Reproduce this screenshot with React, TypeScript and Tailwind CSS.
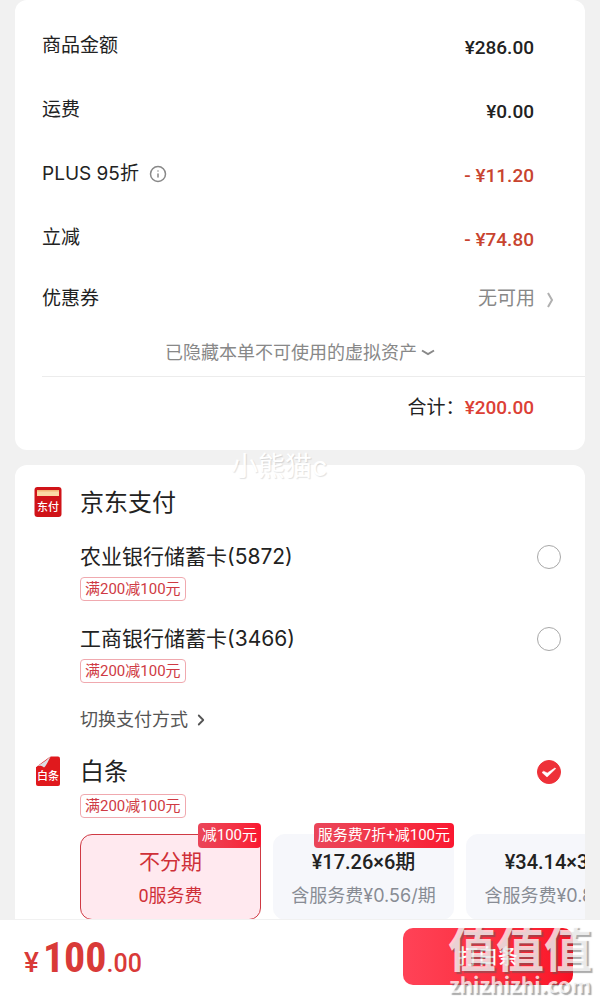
import { useState } from 'react'
import { ChevronRight, Info } from 'lucide-react'

const cjk = "font-[Inter,'Noto_Sans_CJK_SC',sans-serif]"
const num = "font-[Roboto,'Noto_Sans_CJK_SC',sans-serif]"

const fees = [
  { label: '商品金额', value: '¥286.00', off: false, info: false },
  { label: '运费', value: '¥0.00', off: false, info: false },
  { label: 'PLUS 95折', value: '- ¥11.20', off: true, info: true },
  { label: '立减', value: '- ¥74.80', off: true, info: false },
]

const cards = [
  { id: 'abc', name: '农业银行储蓄卡(5872)' },
  { id: 'icbc', name: '工商银行储蓄卡(3466)' },
]

const plans = [
  { title: '不分期', note: '0服务费', badge: '减100元' },
  { title: '¥17.26×6期', note: '含服务费¥0.56/期', badge: '服务费7折+减100元' },
  { title: '¥34.14×3期', note: '含服务费¥0.85/期', badge: '' },
]

function PayIcon() {
  return (
    <svg viewBox="0 0 28 32" className="w-7 h-8" aria-hidden="true">
      <rect x="0.5" y="0" width="27" height="30" rx="3" fill="#d01318" />
      <rect x="3" y="3" width="22" height="6" fill="#fbd9a4" />
      <rect x="3" y="3" width="22" height="1.5" fill="#f2b777" />
      <text x="14" y="24" textAnchor="middle" fontSize="11" fontWeight="500" fill="#fff" fontFamily="Noto Sans CJK SC, sans-serif">东付</text>
    </svg>
  )
}

function BaitiaoIcon() {
  return (
    <svg viewBox="0 0 28 32" className="w-7 h-8" aria-hidden="true">
      <path d="M2 11 L14 0.5 H24 a2 2 0 0 1 2 2 V28 a2 2 0 0 1 -2 2 H4 a2 2 0 0 1 -2 -2 Z" fill="#e0191d" />
      <path d="M1 0 H17 L2 11 Z" fill="#fff" />
      <path d="M2 10.5 C6 9 13 4 17 0 C14.5 4 13 9 10 11.5 C8 9.5 5 9.5 2 10.5 Z" fill="#dcdfe3" />
      <text x="14" y="24" textAnchor="middle" fontSize="11" fontWeight="500" fill="#fff" fontFamily="Noto Sans CJK SC, sans-serif">白条</text>
    </svg>
  )
}

function Tag() {
  return (
    <span className={`flex items-center w-fit h-6 px-1 border border-[#f0a9af] rounded-sm text-[15px] text-[#cf3a44] ${num}`}>
      满200减100元
    </span>
  )
}

function Radio({ id, checked, onSelect }: { id: string; checked: boolean; onSelect: () => void }) {
  return (
    <span className="grid size-6 shrink-0">
      <input
        type="radio"
        id={id}
        name="pay"
        checked={checked}
        onChange={onSelect}
        className="col-start-1 row-start-1 appearance-none size-6 rounded-full border border-[#a8a8a8] checked:border-[#ee3038] checked:bg-[#ee3038]"
      />
      {checked && (
        <svg viewBox="0 0 24 24" className="col-start-1 row-start-1 size-6 pointer-events-none" aria-hidden="true">
          <path d="M5 12.4 L6.6 11.2 L10.3 13 L17.8 8 L18.8 8.6 L10 17 Z" fill="#fff" stroke="#fff" strokeWidth="0.5" strokeLinejoin="round" />
        </svg>
      )}
    </span>
  )
}

export default function App() {
  const [pay, setPay] = useState('baitiao')
  const [plan, setPlan] = useState(0)

  return (
    <div className={`relative h-screen flex flex-col bg-[#f1f1f1] text-[#222] ${cjk}`}>
      <main className="flex-1 min-h-0 overflow-hidden px-[15px]">
        <section className="bg-white rounded-xl pt-[14px] pb-[10px] pl-[27px]">
          {fees.map(f => (
            <div key={f.label} className="flex items-center justify-between h-16 pr-[51px] text-[19px]">
              <span className="flex items-center gap-[10px]">
                {f.label}
                {f.info && <Info size={18} strokeWidth={2} className="text-[#888]" />}
              </span>
              <span className={`flex gap-1 font-medium pt-1 ${num} ${f.off ? 'text-[#c8442f]' : ''}`}>{f.value}</span>
            </div>
          ))}
          <div className="flex items-center justify-between h-[59px] pr-7 text-[19px]">
            <span>优惠券</span>
            <button className="flex items-center gap-2 text-[#888]">
              无可用
              <svg viewBox="0 0 14 18" className="w-[14px] h-[18px]" fill="none" stroke="#b0b0b0" strokeWidth="2" aria-hidden="true">
                <path d="M5 2 L9 9 L5 16" />
              </svg>
            </button>
          </div>
          <button className="flex items-center justify-center gap-1 w-full h-12 pr-[27px] text-lg text-[#888] border-b border-[#ececec]">
            已隐藏本单不可使用的虚拟资产
            <svg viewBox="0 0 14 8" className="w-[14px] h-2" fill="none" stroke="#888" strokeWidth="2" aria-hidden="true">
              <path d="M1 1.5 L7 5 L13 1.5" />
            </svg>
          </button>
          <div className="flex items-center justify-end h-[63px] pr-[51px] text-[19px]">
            <span>合计：</span>
            <span className={`font-medium text-[#dc4035] ${num}`}>¥200.00</span>
          </div>
        </section>

        <section className="mt-[15px] bg-white rounded-xl pt-[19px] pb-3 pl-[19px] overflow-hidden">
          <div className="flex items-center gap-[18px] h-[38px] text-2xl">
            <PayIcon />
            <h2>京东支付</h2>
          </div>
          <div className="flex flex-col gap-[22px] mt-[19px] pl-[46px] pr-6">
            {cards.map(c => (
              <div key={c.id}>
                <div className="flex items-center justify-between h-8 mb-1 text-[21px]">
                  <label htmlFor={c.id}>{c.name}</label>
                  <Radio id={c.id} checked={pay === c.id} onSelect={() => setPay(c.id)} />
                </div>
                <Tag />
              </div>
            ))}
          </div>
          <button className="flex items-center gap-1 h-6 mt-[25px] ml-[46px] text-lg text-[#555]">
            切换支付方式
            <ChevronRight size={18} strokeWidth={2.4} />
          </button>
          <div className="flex items-center gap-[18px] h-[38px] mt-[21px] pr-6 text-2xl">
            <BaitiaoIcon />
            <label htmlFor="baitiao" className="flex-1">白条</label>
            <Radio id="baitiao" checked={pay === 'baitiao'} onSelect={() => setPay('baitiao')} />
          </div>
          <div className="pl-[46px] pt-[3px]">
            <Tag />
            <div className="flex gap-3 mt-4">
              {plans.map((p, i) => (
                <button
                  key={p.title}
                  onClick={() => setPlan(i)}
                  className={`relative flex flex-col items-center shrink-0 w-[181px] h-[86px] pt-[11px] rounded-xl border ${
                    plan === i ? 'bg-[#ffe9ef] border-[#cf3a44] text-[#cf3038]' : 'bg-[#f6f7fb] border-[#f6f7fb]'
                  }`}
                >
                  {p.badge && (
                    <span className={`absolute -top-3 -right-px h-[25px] flex items-center px-1 rounded-sm text-[15px] text-white whitespace-nowrap bg-linear-to-r from-[#ea4559] to-[#fa1630] ${num}`}>
                      {p.badge}
                    </span>
                  )}
                  <span className={`leading-8 ${i ? `text-xl font-medium ${num}` : 'text-[21px]'}`}>{p.title}</span>
                  <span className={`text-lg leading-9 whitespace-nowrap ${plan === i ? num : 'text-[#888c94]'}`}>{p.note}</span>
                </button>
              ))}
            </div>
          </div>
        </section>
      </main>

      <footer className="flex items-center justify-between h-[84px] pl-6 pr-[27px] pb-[10px] bg-white border-t border-[#f1f1f1]">
        <p className={`flex items-baseline pt-[2px] text-[#d93a38] font-medium ${num}`}>
          <span className="text-[28px] mr-1">¥</span>
          <span className="text-[42px] font-bold font-['Roboto_Condensed','Liberation_Sans_Narrow',Roboto,sans-serif]">100</span>
          <span className="text-[25px]">.00</span>
        </p>
        <button className="w-[170px] h-[57px] rounded-[10px] text-xl font-medium text-white bg-linear-to-r from-[#ff4257] to-[#fa1024]">
          打白条
        </button>
      </footer>

      <span className="absolute left-[231px] top-[447px] text-[27px] text-white whitespace-nowrap pointer-events-none text-shadow-[1px_1px_1px_rgba(0,0,0,0.12)]">
        小熊猫c
      </span>
      <div className="absolute right-2 bottom-[6px] flex flex-col items-center font-bold text-white/75 pointer-events-none font-['Noto_Sans_CJK_SC',sans-serif] text-shadow-[2px_2px_1px_rgba(90,90,90,0.5)]">
        <span className="text-5xl leading-[50px]">值值值</span>
        <span className="text-[21px] leading-[26px]">zhizhizhi.com</span>
      </div>
    </div>
  )
}
